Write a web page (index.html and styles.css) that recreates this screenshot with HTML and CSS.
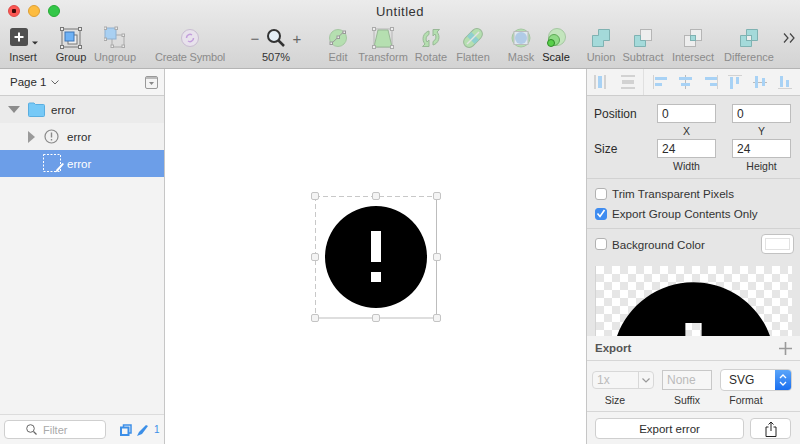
FILE: index.html
```html
<!DOCTYPE html>
<html lang="en">
<head>
<meta charset="utf-8">
<title>Untitled</title>
<link rel="stylesheet" href="styles.css">
</head>
<body>
<div class="window">
  <header class="top">
    <div class="titlebar">
      <div class="lights">
        <span class="light red"></span><span class="light amber"></span><span class="light green"></span>
      </div>
      <div class="title">Untitled</div>
    </div>
    <div class="toolbar">
      <div class="tool w46">
        <svg class="inserticon" width="30" height="20" viewBox="0 0 30 20"><rect x="0" y="0" width="18" height="18" rx="2.500" fill="#4f4f4f"/><path d="M9 4.500v9M4.500 9h9" stroke="#fff" stroke-width="2"/><path d="M22 13.500h6l-3 3z" fill="#333"/></svg>
        <span>Insert</span>
      </div>
      <div class="tool w50">
        <svg width="22" height="22" viewBox="0 0 22 22"><rect x="2" y="2" width="18" height="18" fill="none" stroke="#777"/><rect x="8" y="8" width="9" height="9" fill="#eee" stroke="#777"/><rect x="5" y="5" width="9" height="9" fill="#6fb2f5" stroke="#3f76b8"/><g fill="#eee" stroke="#777"><rect x="0.500" y="0.500" width="3" height="3"/><rect x="18.500" y="0.500" width="3" height="3"/><rect x="0.500" y="18.500" width="3" height="3"/><rect x="18.500" y="18.500" width="3" height="3"/></g></svg>
        <span>Group</span>
      </div>
      <div class="tool w38 off">
        <svg width="22" height="22" viewBox="0 0 22 22"><rect x="8" y="8" width="12" height="12" fill="none" stroke="#aaa"/><rect x="1" y="1" width="11" height="11" fill="#a9d0f2" stroke="#8fb0cf"/><g fill="#eee" stroke="#aaa"><rect x="0" y="0" width="2.500" height="2.500"/><rect x="11" y="0" width="2.500" height="2.500"/><rect x="0" y="11" width="2.500" height="2.500"/><rect x="18" y="7" width="2.500" height="2.500"/><rect x="18" y="18" width="2.500" height="2.500"/><rect x="7" y="18" width="2.500" height="2.500"/></g></svg>
        <span>Ungroup</span>
      </div>
      <div class="tool w80 ml16 off">
        <svg width="20" height="20" viewBox="0 0 20 20"><circle cx="10" cy="10" r="8.500" fill="#e8e2ec" stroke="#c9bcd2"/><path d="M6.500 10a3.500 3.500 0 0 1 5.500-3M13.500 10a3.500 3.500 0 0 1-5.500 3" fill="none" stroke="#c39fdc" stroke-width="1.500"/></svg>
        <span class="tight">Create Symbol</span>
      </div>
      <div class="tool w60 ml16">
        <div class="zoomicons">
          <span class="zoomsign">&#8722;</span>
          <svg width="20" height="20" viewBox="0 0 20 20"><circle cx="8" cy="8" r="6" fill="#e4eef6" stroke="#333" stroke-width="2"/><path d="M12.500 12.500L18 18" stroke="#333" stroke-width="2.500"/></svg>
          <span class="zoomsign">+</span>
        </div>
        <span>507%</span>
      </div>
      <div class="tool w32 ml16 off">
        <svg width="20" height="20" viewBox="0 0 20 20"><circle cx="10" cy="10" r="8.500" fill="#b5dfb0" stroke="#a5c7a2"/><path d="M3.500 15.500L15.500 4" stroke="#999"/><g fill="#eee" stroke="#999"><rect x="2" y="14" width="2.500" height="2.500"/><rect x="9" y="8" width="2.500" height="2.500"/><rect x="15" y="3" width="2.500" height="2.500"/></g></svg>
        <span>Edit</span>
      </div>
      <div class="tool w58 off">
        <svg width="22" height="22" viewBox="0 0 22 22"><rect x="2" y="2" width="18" height="18" fill="none" stroke="#b5b5b5"/><path d="M6 3h10l4 17H2z" fill="#b5dfb0" stroke="#98b896"/><g fill="#eee" stroke="#aaa"><rect x="0.500" y="0.500" width="3" height="3"/><rect x="18.500" y="0.500" width="3" height="3"/><rect x="0.500" y="18.500" width="3" height="3"/><rect x="18.500" y="18.500" width="3" height="3"/></g></svg>
        <span>Transform</span>
      </div>
      <div class="tool w38 off">
        <svg width="24" height="22" viewBox="0 0 24 22"><path d="M10 4a8 8 0 0 0-4 13l-2.500 2.500H10V13l-2 2a5 5 0 0 1 2-7.500z" fill="#b5dfb0" stroke="#98b896"/><path d="M14 18a8 8 0 0 0 4-13l2.500-2.500H14V9l2-2a5 5 0 0 1-2 7.500z" fill="#b5dfb0" stroke="#98b896"/></svg>
        <span>Rotate</span>
      </div>
      <div class="tool w46 off">
        <svg width="20" height="20" viewBox="0 0 20 20"><g transform="rotate(-45 10 10)"><rect x="-1" y="4.500" width="22" height="11" rx="5.500" fill="#b5dfb0" stroke="#98b896"/><rect x="7" y="4.500" width="6" height="11" fill="#8fd0cf"/></g><path d="M4 16L16 4" stroke="#e4e4e4" stroke-width="1.500"/></svg>
        <span>Flatten</span>
      </div>
      <div class="tool w38 ml6 off">
        <svg width="22" height="20" viewBox="0 0 22 20"><circle cx="11" cy="10" r="9" fill="#b5dfb0" stroke="#a5c7a2"/><rect x="4" y="3.500" width="14" height="13" fill="#dfe8ef" stroke="#bbb"/><circle cx="11" cy="10" r="6" fill="#9dbfe2" opacity=".7"/></svg>
        <span>Mask</span>
      </div>
      <div class="tool w32 on">
        <svg width="20" height="20" viewBox="0 0 20 20"><circle cx="11" cy="9" r="8.500" fill="#c3e5bd" stroke="#a5c7a2"/><circle cx="8" cy="12" r="5.500" fill="#8fdb86" stroke="#5da955"/><circle cx="5" cy="15" r="3.500" fill="#58d04a" stroke="#2f8a28"/></svg>
        <span>Scale</span>
      </div>
      <div class="tool w42 ml8 off">
        <svg width="20" height="20" viewBox="0 0 20 20"><path d="M7.500 1.500h11v11h-6v6h-11v-11h6z" fill="#a4dada" stroke="#7fb2b2"/></svg>
        <span>Union</span>
      </div>
      <div class="tool w42 off">
        <svg width="20" height="20" viewBox="0 0 20 20"><rect x="7.500" y="1.500" width="11" height="11" fill="#eee" stroke="#b5b5b5"/><path d="M1.500 7.500h6v5h5v6h-11z" fill="#a4dada" stroke="#7fb2b2"/></svg>
        <span>Subtract</span>
      </div>
      <div class="tool w56 ml1 off">
        <svg width="20" height="20" viewBox="0 0 20 20"><rect x="7.500" y="1.500" width="11" height="11" fill="#eee" stroke="#b5b5b5"/><rect x="1.500" y="7.500" width="11" height="11" fill="#eee" stroke="#b5b5b5"/><rect x="7.500" y="7.500" width="5" height="5" fill="#a4dada" stroke="#7fb2b2"/></svg>
        <span>Intersect</span>
      </div>
      <div class="tool w56 off">
        <svg width="20" height="20" viewBox="0 0 20 20"><path d="M7.500 1.500h11v11h-6v6h-11v-11h6z" fill="#a4dada" stroke="#7fb2b2"/><rect x="7.500" y="7.500" width="5" height="5" fill="#eee" stroke="#7fb2b2"/></svg>
        <span>Difference</span>
      </div>
      <div class="more">
        <svg width="12" height="10" viewBox="0 0 12 10"><path d="M1 0.500L5 5 1 9.500M7 0.500L11 5 7 9.500" fill="none" stroke="#444" stroke-width="1.200"/></svg>
      </div>
    </div>
  </header>

  <div class="main">
    <aside class="layers">
      <div class="pagebar">
        <span class="pagename">Page 1</span>
        <svg width="8" height="5" viewBox="0 0 8 5"><path d="M0.500 0.500L4 4l3.500-3.500" fill="none" stroke="#666"/></svg>
        <svg class="pagetoggle" width="13" height="13" viewBox="0 0 13 13"><rect x="0.500" y="0.500" width="12" height="12" rx="1.500" fill="#f4f4f4" stroke="#999"/><path d="M1 1h11v2H1z" fill="#bbb"/><path d="M4 6h5L6.500 9z" fill="#888"/></svg>
      </div>
      <div class="layer folder">
        <svg width="12" height="7" viewBox="0 0 12 7"><path d="M0 0h12L6 7z" fill="#8c8c8c"/></svg>
        <svg width="17" height="15" viewBox="0 0 17 15"><path d="M0.500 2a1 1 0 0 1 1-1h4.500l1.500 1.500h8a1 1 0 0 1 1 1v10a1 1 0 0 1-1 1h-14a1 1 0 0 1-1-1z" fill="#76c9f7" stroke="#5aaee0"/></svg>
        <span>error</span>
      </div>
      <div class="layer sub">
        <svg width="7" height="12" viewBox="0 0 7 12"><path d="M0 0v12l7-6z" fill="#9a9a9a"/></svg>
        <svg width="15" height="15" viewBox="0 0 15 15"><circle cx="7.500" cy="7.500" r="6.500" fill="#f1f1f1" stroke="#8a8a8a" stroke-width="1.200"/><path d="M7.500 3.500v5M7.500 10v1.500" stroke="#8a8a8a" stroke-width="1.400"/></svg>
        <span>error</span>
      </div>
      <div class="layer chosen">
        <svg width="21" height="19" viewBox="0 0 21 19"><rect x="0.500" y="0.500" width="17" height="17" fill="none" stroke="#fff" stroke-dasharray="2 1.500"/><path d="M12.500 18.500l1-3 6-6.500 1.500 1-5.500 6.500z" fill="#fff"/></svg>
        <span>error</span>
      </div>
      <div class="spacer"></div>
      <div class="filterbar">
        <div class="filter">
          <svg width="11" height="11" viewBox="0 0 11 11"><circle cx="4.500" cy="4.500" r="3.800" fill="none" stroke="#666"/><path d="M7.500 7.500L10.500 10.500" stroke="#666" stroke-width="1.200"/></svg>
          <span>Filter</span>
        </div>
        <svg class="filt-a" width="12" height="12" viewBox="0 0 12 12"><path d="M3.500 3V1H11v8H9" fill="none" stroke="#3c8fe8" stroke-width="1.500"/><rect x="1" y="3.500" width="7.500" height="7.500" fill="none" stroke="#3c8fe8" stroke-width="2"/></svg>
        <svg class="filt-b" width="12" height="12" viewBox="0 0 12 12"><path d="M0 12l2-4 7-7 2 1-6 8z" fill="#3c8fe8"/></svg>
        <span class="filt-n">1</span>
      </div>
    </aside>

    <section class="canvas">
      <svg width="133" height="133" viewBox="0 0 133 133">
        <path d="M6 6.500h122M6.500 6v122" fill="none" stroke="#c8c8c8" stroke-dasharray="5 3"/>
        <path d="M127.500 6v122H6" fill="none" stroke="#bdbdbd"/>
        <path fill-rule="evenodd" d="M67 16a51 51 0 1 0 0 102a51 51 0 1 0 0-102zM62 41h10v31H62zM62 82h10v10H62z" fill="#000"/>
        <g fill="#f4f4f4" stroke="#c4c4c4">
          <rect x="2.500" y="2.500" width="7" height="7" rx="1.500"/><rect x="63.500" y="2.500" width="7" height="7" rx="1.500"/><rect x="124.500" y="2.500" width="7" height="7" rx="1.500"/>
          <rect x="2.500" y="63.500" width="7" height="7" rx="1.500"/><rect x="124.500" y="63.500" width="7" height="7" rx="1.500"/>
          <rect x="2.500" y="124.500" width="7" height="7" rx="1.500"/><rect x="63.500" y="124.500" width="7" height="7" rx="1.500"/><rect x="124.500" y="124.500" width="7" height="7" rx="1.500"/>
        </g>
      </svg>
    </section>

    <aside class="inspector">
      <div class="alignbar">
        <div class="aligngroup first">
          <svg width="27" height="14" viewBox="0 0 27 14"><path d="M7 0v14M17 0v14" stroke="#d2d2d2" stroke-width="2"/><rect x="10" y="1" width="4" height="12" fill="#a8d2f5"/></svg>
          <svg width="27" height="14" viewBox="0 0 27 14"><path d="M6 1h14M6 13h14" stroke="#d2d2d2" stroke-width="2"/><rect x="7" y="5" width="12" height="4" fill="#d2d2d2"/></svg>
        </div>
        <div class="aligngroup">
          <svg width="25" height="14" viewBox="0 0 25 14"><path d="M5.500 0v14" stroke="#d2d2d2"/><rect x="7" y="2" width="12" height="3" fill="#a8d2f5"/><rect x="7" y="8" width="7" height="3" fill="#a8d2f5"/></svg>
          <svg width="25" height="14" viewBox="0 0 25 14"><path d="M12.500 0v14" stroke="#bbb"/><rect x="6" y="2" width="13" height="3" fill="#a8d2f5"/><rect x="8" y="8" width="9" height="3" fill="#a8d2f5"/></svg>
          <svg width="25" height="14" viewBox="0 0 25 14"><path d="M19.500 0v14" stroke="#d2d2d2"/><rect x="7" y="2" width="12" height="3" fill="#a8d2f5"/><rect x="12" y="8" width="7" height="3" fill="#a8d2f5"/></svg>
          <svg width="25" height="14" viewBox="0 0 25 14"><path d="M5 0.500h14" stroke="#d2d2d2"/><rect x="7" y="2" width="3" height="12" fill="#a8d2f5"/><rect x="13" y="2" width="3" height="7" fill="#a8d2f5"/></svg>
          <svg width="25" height="14" viewBox="0 0 25 14"><path d="M5 7.500h14" stroke="#bbb"/><rect x="7" y="1" width="3" height="12" fill="#a8d2f5"/><rect x="14" y="3" width="3" height="8" fill="#a8d2f5"/></svg>
          <svg width="25" height="14" viewBox="0 0 25 14"><path d="M5 13.500h14" stroke="#d2d2d2"/><rect x="7" y="1" width="3" height="11" fill="#a8d2f5"/><rect x="13" y="5" width="3" height="7" fill="#a8d2f5"/></svg>
        </div>
      </div>

      <div class="geometry">
        <span class="rowlabel">Position</span>
        <input class="field" value="0">
        <input class="field" value="0">
        <span></span><span class="cap">X</span><span class="cap">Y</span>
        <span class="rowlabel">Size</span>
        <input class="field" value="24">
        <input class="field" value="24">
        <span></span><span class="cap">Width</span><span class="cap">Height</span>
      </div>

      <div class="options">
        <div class="check"><span class="box"></span>Trim Transparent Pixels</div>
        <div class="check"><span class="box ticked"><svg width="10" height="9" viewBox="0 0 10 9"><path d="M1.500 4.500L4 7.500 8.500 1" fill="none" stroke="#fff" stroke-width="1.600"/></svg></span>Export Group Contents Only</div>
      </div>

      <div class="bgcolor">
        <div class="check"><span class="box"></span>Background Color</div>
        <div class="swatch"><i></i></div>
      </div>

      <div class="preview">
        <svg width="195" height="195" viewBox="0 0 24 24"><path d="M12 2C6.480 2 2 6.480 2 12s4.480 10 10 10 10-4.480 10-10S17.520 2 12 2zm1 15h-2v-2h2v2zm0-4h-2V7h2v6z" fill="#000"/></svg>
      </div>

      <div class="exporthead">
        <b>Export</b>
        <svg width="13" height="13" viewBox="0 0 13 13"><path d="M6.500 0v13M0 6.500h13" stroke="#9a9a9a" stroke-width="1.600"/></svg>
      </div>

      <div class="exportrow">
        <div class="col">
          <div class="ctl"><div class="sizebox"><span>1x</span><i><svg width="8" height="5" viewBox="0 0 8 5"><path d="M0.500 0.500L4 4l3.500-3.500" fill="none" stroke="#999" stroke-width="1.200"/></svg></i></div></div>
          <span class="cap cap-size">Size</span>
        </div>
        <div class="col">
          <div class="ctl"><div class="suffix">None</div></div>
          <span class="cap">Suffix</span>
        </div>
        <div class="col">
          <div class="ctl"><div class="format"><span>SVG</span><i><svg width="8" height="14" viewBox="0 0 8 14"><path d="M1 5l3-3 3 3M1 9l3 3 3-3" fill="none" stroke="#fff" stroke-width="1.300"/></svg></i></div></div>
          <span class="cap cap-format">Format</span>
        </div>
      </div>

      <div class="exportbtns">
        <div class="btn wide">Export error</div>
        <div class="btn share"><svg width="12" height="16" viewBox="0 0 12 16"><path d="M3.500 6H1v9.500h10V6H8.500M6 10V1M3.500 3.500L6 1l2.500 2.500" fill="none" stroke="#222"/></svg></div>
      </div>
    </aside>
  </div>
</div>
</body>
</html>
```

FILE: styles.css
```css
html, body {
	margin: 0;
	padding: 0;
}
body {
	width: 800px;
	height: 444px;
	overflow: hidden;
	font-family: "Liberation Sans", Arial, sans-serif;
	font-size: 11px;
	color: #2c2c2c;
	background: #fff;
}
.window {
	display: flex;
	flex-direction: column;
	height: 444px;
}

/* title bar and toolbar */
.top {
	height: 69px;
	flex: none;
	box-sizing: border-box;
	border-bottom: 1px solid #b4b4b4;
	background: linear-gradient(#ebebeb, #d3d3d3);
}
.titlebar {
	height: 22px;
	position: relative;
	display: flex;
	align-items: center;
	justify-content: center;
}
.lights {
	position: absolute;
	left: 8px;
	top: 5px;
	display: flex;
	gap: 8px;
}
.light {
	width: 12px;
	height: 12px;
	border-radius: 50%;
	box-sizing: border-box;
}
.red {
	background: radial-gradient(circle, #3d0a08 0 2px, #fc5753 2.5px);
	border: 1px solid #df4744;
}
.amber {
	background: #fdbc40;
	border: 1px solid #de9f34;
}
.green {
	background: #33c748;
	border: 1px solid #27aa35;
}
.title {
	font-size: 13px;
	letter-spacing: .5px;
	color: #333;
}
.toolbar {
	display: flex;
	height: 46px;
}
.tool {
	display: flex;
	flex-direction: column;
	align-items: center;
	flex: none;
	color: #333;
	white-space: nowrap;
}
.tool svg {
	display: block;
}
.tool > svg, .zoomicons {
	height: 24px;
	margin-top: 4px;
}
.tool > .inserticon {
	margin-left: 4px;
}
.tool > span {
	margin-top: 1px;
	line-height: 13px;
}
.tool > .tight {
	letter-spacing: -.2px;
}
.off > span {
	color: #8b8b8b;
}
.on > span {
	color: #222;
}
.w32 { width: 32px; }
.w38 { width: 38px; }
.w42 { width: 42px; }
.w46 { width: 46px; }
.w50 { width: 50px; }
.w56 { width: 56px; }
.w58 { width: 58px; }
.w60 { width: 60px; }
.w80 { width: 80px; }
.ml1 { margin-left: 1px; }
.ml6 { margin-left: 6px; }
.ml8 { margin-left: 8px; }
.ml16 { margin-left: 16px; }
.zoomicons {
	display: flex;
	align-items: center;
	gap: 4px;
}
.zoomsign {
	width: 14px;
	text-align: center;
	font-size: 15px;
	color: #666;
}
.more {
	flex: none;
	margin: 11px 0 0 6px;
}

/* three columns */
.main {
	flex: 1;
	display: flex;
	min-height: 0;
}
.layers {
	width: 165px;
	flex: none;
	box-sizing: border-box;
	display: flex;
	flex-direction: column;
	border-right: 1px solid #c6c6c6;
	background: #f3f3f3;
}
.pagebar {
	height: 27px;
	flex: none;
	box-sizing: border-box;
	display: flex;
	align-items: center;
	gap: 5px;
	padding: 0 6px 0 10px;
	font-size: 11.500px;
	border-bottom: 1px solid #cdcdcd;
	background: #f5f5f5;
}
.pagetoggle {
	margin-left: auto;
}
.layer {
	height: 27px;
	flex: none;
	box-sizing: border-box;
	display: flex;
	align-items: center;
	font-size: 11.500px;
}
.folder {
	padding-left: 8px;
	gap: 8px;
	background: #ebebeb;
}
.folder span {
	margin-left: -2px;
}
.sub {
	padding-left: 28px;
	gap: 9px;
	background: #f1f1f1;
}
.sub span {
	margin-left: -1px;
}
.chosen {
	padding-left: 43px;
	gap: 3px;
	color: #fff;
	background: #6c9ee8;
}
.spacer {
	flex: 1;
}
.filterbar {
	height: 30px;
	flex: none;
	box-sizing: border-box;
	display: flex;
	align-items: center;
	padding: 0 0 0 4px;
	border-top: 1px solid #dcdcdc;
	background: #f5f5f5;
}
.filter {
	width: 102px;
	height: 19px;
	box-sizing: border-box;
	display: flex;
	align-items: center;
	gap: 6px;
	padding-left: 21px;
	border: 1px solid #cfcfcf;
	border-radius: 4px;
	background: #fff;
	color: #aaa;
	font-size: 11px;
}
.filt-a {
	margin-left: 14px;
}
.filt-b {
	margin-left: 5px;
}
.filt-n {
	margin-left: 5px;
	font-size: 10px;
	color: #3c8fe8;
}
.canvas {
	flex: 1;
	display: flex;
	align-items: center;
	justify-content: center;
	background: #fff;
}

/* inspector */
.inspector {
	width: 214px;
	flex: none;
	box-sizing: border-box;
	display: flex;
	flex-direction: column;
	border-left: 1px solid #c6c6c6;
	background: #e6e6e6;
	overflow: hidden;
}
.alignbar {
	height: 27px;
	flex: none;
	box-sizing: border-box;
	display: flex;
	border-bottom: 1px solid #cdcdcd;
	background: #f3f3f3;
}
.aligngroup {
	display: flex;
	align-items: center;
	padding-left: 4px;
}
.aligngroup.first {
	width: 57px;
	box-sizing: border-box;
	padding-left: 1px;
	border-right: 1px solid #e0e0e0;
}
.geometry {
	flex: none;
	box-sizing: border-box;
	display: grid;
	grid-template-columns: 47px 59px 59px;
	grid-template-rows: 19px 16px 19px 16px;
	column-gap: 16px;
	align-items: center;
	padding: 8px 0 0 7px;
	height: 83px;
	border-bottom: 1px solid #d2d2d2;
}
.rowlabel {
	font-size: 12px;
}
.field {
	width: 59px;
	height: 19px;
	box-sizing: border-box;
	margin: 0;
	padding: 0 4px;
	border: 1px solid #bdbdbd;
	background: #fff;
	font: 12px "Liberation Sans", Arial, sans-serif;
	color: #2c2c2c;
	outline: 0;
}
.cap {
	text-align: center;
	font-size: 10.500px;
	line-height: 13px;
	color: #333;
}
.options {
	flex: none;
	box-sizing: border-box;
	height: 50px;
	padding-top: 8px;
	display: flex;
	flex-direction: column;
	gap: 7px;
	border-bottom: 1px solid #d2d2d2;
}
.check {
	display: flex;
	align-items: center;
	gap: 5px;
	padding-left: 8px;
	height: 13px;
	font-size: 11.600px;
	color: #333;
}
.box {
	width: 12px;
	height: 12px;
	box-sizing: border-box;
	display: flex;
	align-items: center;
	justify-content: center;
	border: 1px solid #b2b2b2;
	border-radius: 3px;
	background: #fff;
}
.box.ticked {
	border-color: #3f8cf0;
	background: #3f8cf0;
}
.bgcolor {
	flex: none;
	height: 30px;
	display: flex;
	align-items: center;
	justify-content: space-between;
	padding-right: 6px;
}
.swatch {
	width: 33px;
	height: 20px;
	box-sizing: border-box;
	padding: 3px;
	border: 1px solid #c2c2c2;
	border-radius: 4px;
	background: #fff;
}
.swatch i {
	display: block;
	height: 100%;
	box-sizing: border-box;
	border: 1px solid #e2e2e2;
}
.preview {
	flex: 1;
	min-height: 0;
	margin: 7px 8px 0 8px;
	overflow: hidden;
	border-left: 1px solid #d4d4d4;
	background-color: #fff;
	background-image: conic-gradient(#e6e6e6 25%, #fff 0 50%, #e6e6e6 0 75%, #fff 0);
	background-size: 16px 16px;
}
.preview svg {
	display: block;
}
.exporthead {
	height: 25px;
	flex: none;
	box-sizing: border-box;
	display: flex;
	align-items: center;
	justify-content: space-between;
	padding: 0 8px;
	border-bottom: 1px solid #d6d6d6;
	background: #f3f3f3;
	color: #555;
	font-size: 11.500px;
}
.exportrow {
	height: 51px;
	flex: none;
	box-sizing: border-box;
	display: flex;
	gap: 8px;
	padding: 8px 0 0 5px;
	border-bottom: 1px solid #d6d6d6;
	background: #f3f3f3;
}
.col {
	display: flex;
	flex-direction: column;
	gap: 3px;
}
.ctl {
	height: 22px;
	display: flex;
	align-items: center;
}
.cap-size {
	padding-right: 16px;
}
.cap-format {
	padding-right: 20px;
}
.sizebox {
	width: 62px;
	height: 18px;
	box-sizing: border-box;
	display: flex;
	align-items: center;
	border: 1px solid #d8d8d8;
	border-radius: 4px;
	background: #f6f6f6;
	color: #bbb;
	font-size: 12px;
}
.sizebox span {
	flex: 1;
	padding-left: 4px;
}
.sizebox i {
	width: 14px;
	height: 100%;
	display: flex;
	align-items: center;
	justify-content: center;
	border-left: 1px solid #d8d8d8;
}
.suffix {
	width: 50px;
	height: 20px;
	box-sizing: border-box;
	padding-left: 4px;
	line-height: 18px;
	border: 1px solid #c8c8c8;
	background: #f6f6f6;
	color: #bbb;
	font-size: 12px;
}
.format {
	width: 72px;
	height: 22px;
	box-sizing: border-box;
	display: flex;
	align-items: center;
	border: 1px solid #d0d0d0;
	border-radius: 4px;
	background: #fff;
	font-size: 12px;
	overflow: hidden;
}
.format span {
	flex: 1;
	padding-left: 8px;
}
.format i {
	width: 16px;
	height: 100%;
	display: flex;
	align-items: center;
	justify-content: center;
	background: linear-gradient(#5aa5fa, #1a6ff0);
}
.exportbtns {
	height: 32px;
	flex: none;
	display: flex;
	gap: 6px;
	padding: 6px 0 0 8px;
	box-sizing: border-box;
	background: #f3f3f3;
}
.btn {
	height: 21px;
	box-sizing: border-box;
	display: flex;
	align-items: center;
	justify-content: center;
	border: 1px solid #cfcfcf;
	border-radius: 4px;
	background: #fff;
	font-size: 11.500px;
}
.wide {
	width: 149px;
}
.share {
	width: 41px;
}
```
